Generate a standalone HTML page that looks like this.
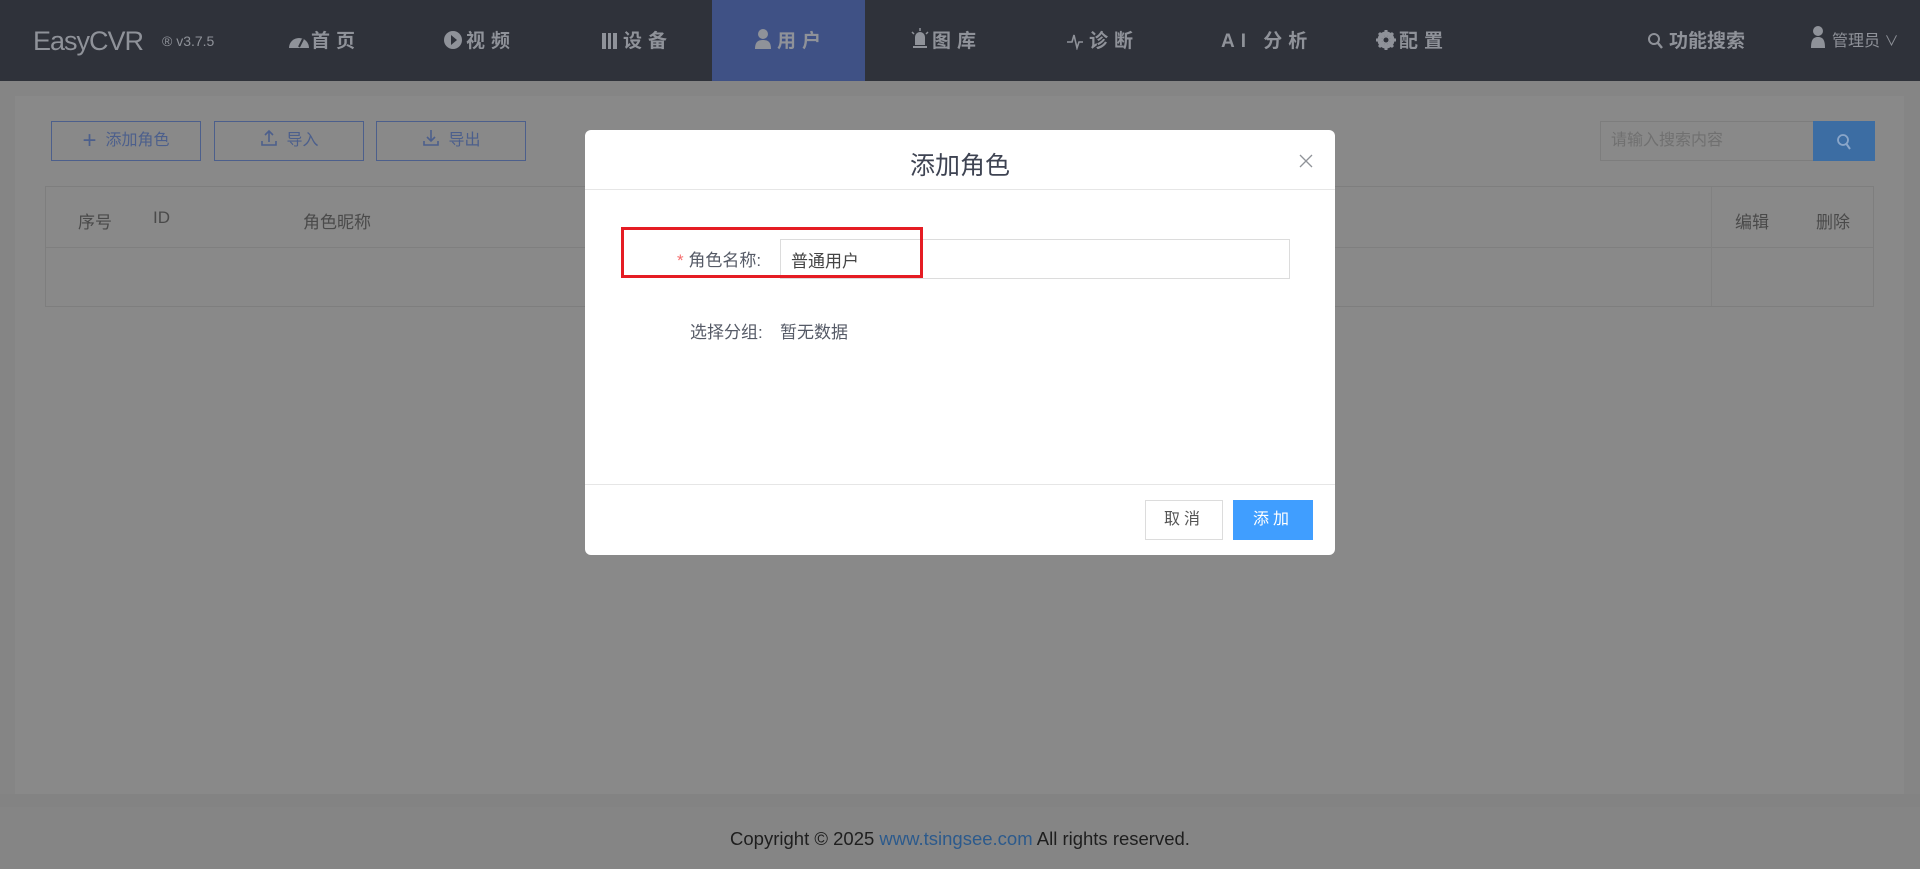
<!DOCTYPE html>
<html><head><meta charset="utf-8"><style>
*{margin:0;padding:0;box-sizing:border-box}
body{width:1920px;height:869px;overflow:hidden;background:#858585;font-family:"Liberation Sans","Noto Sans CJK SC",sans-serif;position:relative}
.a{position:absolute}
.nav{left:0;top:0;width:1920px;height:81px;background:#2f323a}
.ni{position:absolute;top:0;height:81px;line-height:83px;color:#8f9299;font-size:19px;font-weight:bold;letter-spacing:6px;white-space:nowrap}
.ic{display:inline-block;width:24px;vertical-align:-3px}
.btn{position:absolute;top:121px;height:40px;border:1px solid #4c5f8c;color:#4c5f8c;font-size:16px;text-align:center;line-height:38px}
.th{position:absolute;top:208px;font-size:17px;color:#4a4a4a}
</style></head><body>
<div class="a nav"></div>
<div class="a" style="left:712px;top:0;width:153px;height:81px;background:#3f5185"></div>
<div class="ni" style="left:33px;font-weight:normal;font-size:27px;letter-spacing:-1px;color:#8f9299">EasyCVR</div>
<div class="ni" style="left:162px;font-weight:normal;font-size:14px;letter-spacing:0">® v3.7.5</div>
<div class="ni" style="left:287px"><svg class="ic" width="22" height="18" viewBox="0 0 22 18"><path d="M1 16A10 10 0 0 1 21 16Z" fill="#8f9299"/><path d="M11 15L15 7" stroke="#2f323a" stroke-width="2"/></svg>首页</div>
<div class="ni" style="left:442px"><svg class="ic" width="22" height="20" viewBox="0 0 22 20"><circle cx="10" cy="10" r="9" fill="#8f9299"/><path d="M8 5L14 10L8 15Z" fill="#2f323a"/></svg>视频</div>
<div class="ni" style="left:599px"><svg class="ic" width="22" height="18" viewBox="0 0 22 18"><path d="M2 1h4v16H2zM8 1h3v16H8zM13 1h4v16h-4z" fill="#8f9299"/></svg>设备</div>
<div class="ni" style="left:753px"><svg class="ic" width="22" height="22" viewBox="0 0 22 22"><circle cx="9" cy="6" r="5" fill="#8f9299"/><path d="M1 21c0-7 3-9 8-9s8 2 8 9Z" fill="#8f9299"/></svg>用户</div>
<div class="ni" style="left:908px"><svg class="ic" width="22" height="22" viewBox="0 0 22 22"><path d="M4 20h14v-2H4zM6 17h10V9a5 5 0 0 0-10 0z" fill="#8f9299"/><path d="M11 0v3M3 4l2 2M19 4l-2 2" stroke="#8f9299" stroke-width="1.5"/></svg>图库</div>
<div class="ni" style="left:1065px"><svg class="ic" width="22" height="18" viewBox="0 0 22 18"><path d="M1 10h5l2-7 3 13 2-6h4" stroke="#8f9299" stroke-width="1.6" fill="none"/></svg>诊断</div>
<div class="ni" style="left:1221px">AI 分析</div>
<div class="ni" style="left:1375px"><svg class="ic" width="22" height="20" viewBox="0 0 22 20"><circle cx="10" cy="10" r="6.5" fill="none" stroke="#8f9299" stroke-width="4"/><path d="M10 0v20M0 10h20M3 3l14 14M17 3L3 17" stroke="#8f9299" stroke-width="3"/><circle cx="10" cy="10" r="2.5" fill="#2f323a"/></svg>配置</div>
<div class="ni" style="left:1645px;letter-spacing:0"><svg class="ic" width="20" height="18" viewBox="0 0 20 18"><circle cx="7" cy="7" r="5" fill="none" stroke="#8f9299" stroke-width="2"/><path d="M10.5 10.5L15 16" stroke="#8f9299" stroke-width="2.4"/></svg>功能搜索</div>
<div class="ni" style="left:1808px;font-weight:normal;font-size:16px;letter-spacing:0"><svg class="ic" width="22" height="24" viewBox="0 0 22 24"><circle cx="9" cy="6" r="5" fill="#8f9299"/><path d="M2 23c0-8 2-11 7-11s7 3 7 11Z" fill="#8f9299"/></svg>管理员 <span style="font-size:14px">∨</span></div>

<div class="a" style="left:15px;top:96px;width:1889px;height:698px;background:#898989"></div>
<div class="btn" style="left:51px;width:150px"><span style="font-size:24px;vertical-align:-3px">+</span>&nbsp;&nbsp;添加角色</div>
<div class="btn" style="left:214px;width:150px"><svg width="18" height="18" viewBox="0 0 18 18" style="vertical-align:-2px"><path d="M9 13V2M5 6l4-4 4 4M2 12v4h14v-4" stroke="#4c5f8c" stroke-width="1.6" fill="none"/></svg>&nbsp;&nbsp;导入</div>
<div class="btn" style="left:376px;width:150px"><svg width="18" height="18" viewBox="0 0 18 18" style="vertical-align:-2px"><path d="M9 1v11M5 8l4 4 4-4M2 12v4h14v-4" stroke="#4c5f8c" stroke-width="1.6" fill="none"/></svg>&nbsp;&nbsp;导出</div>
<div class="a" style="left:1600px;top:121px;width:214px;height:40px;border:1px solid #7d7d7d;color:#707070;font-size:16px;line-height:38px;padding-left:10px">请输入搜索内容</div>
<div class="a" style="left:1813px;top:121px;width:62px;height:40px;background:#3c6da3;text-align:center;padding-top:12px"><svg width="16" height="18" viewBox="0 0 16 18"><circle cx="7" cy="7" r="5" fill="none" stroke="#8aa6c9" stroke-width="1.8"/><path d="M10.5 11L14 16" stroke="#8aa6c9" stroke-width="2"/></svg></div>
<div class="a" style="left:45px;top:186px;width:1829px;height:121px;border:1px solid #7e7e7e"></div>
<div class="a" style="left:46px;top:247px;width:1827px;height:1px;background:#7f7f7f"></div>
<div class="a" style="left:1711px;top:187px;width:1px;height:119px;background:#818181"></div>
<div class="th" style="left:78px">序号</div>
<div class="th" style="left:153px">ID</div>
<div class="th" style="left:303px">角色昵称</div>
<div class="th" style="left:1735px">编辑</div>
<div class="th" style="left:1816px">删除</div>
<div class="a" style="left:0;top:794px;width:1920px;height:13px;background:#838383"></div>
<div class="a" style="left:0;top:828px;width:1920px;text-align:center;font-size:18.5px;color:#1e1e1e">Copyright © 2025 <span style="color:#2c5a8c">www.tsingsee.com</span> All rights reserved.</div>

<div class="a" style="left:585px;top:130px;width:750px;height:425px;background:#fff;border-radius:6px"></div>
<div class="a" style="left:585px;top:146px;width:750px;text-align:center;font-size:25px;color:#3e4352">添加角色</div>
<svg class="a" style="left:1299px;top:154px" width="14" height="14" viewBox="0 0 14 14"><path d="M1 1L13 13M13 1L1 13" stroke="#909399" stroke-width="1.3"/></svg>
<div class="a" style="left:585px;top:189px;width:750px;height:1px;background:#e6e6e6"></div>
<div class="a" style="left:780px;top:239px;width:510px;height:40px;border:1px solid #dcdcdc"></div>
<div class="a" style="left:677px;top:246px;font-size:17px;color:#555a66"><span style="color:#f56c6c">*</span> 角色名称:</div>
<div class="a" style="left:791px;top:247px;font-size:17px;color:#444">普通用户</div>
<div class="a" style="left:621px;top:227px;width:302px;height:51px;border:3px solid #e51c23"></div>
<div class="a" style="left:690px;top:318px;font-size:17px;color:#555a66">选择分组:</div>
<div class="a" style="left:780px;top:318px;font-size:17px;color:#555a66">暂无数据</div>
<div class="a" style="left:585px;top:484px;width:750px;height:1px;background:#e6e6e6"></div>
<div class="a" style="left:1145px;top:500px;width:78px;height:40px;border:1px solid #dcdcdc;text-align:center;line-height:38px;font-size:16px;color:#555;letter-spacing:4px">取消</div>
<div class="a" style="left:1233px;top:500px;width:80px;height:40px;background:#409eff;text-align:center;line-height:40px;font-size:16px;color:#fff;letter-spacing:4px">添加</div>
</body></html>
